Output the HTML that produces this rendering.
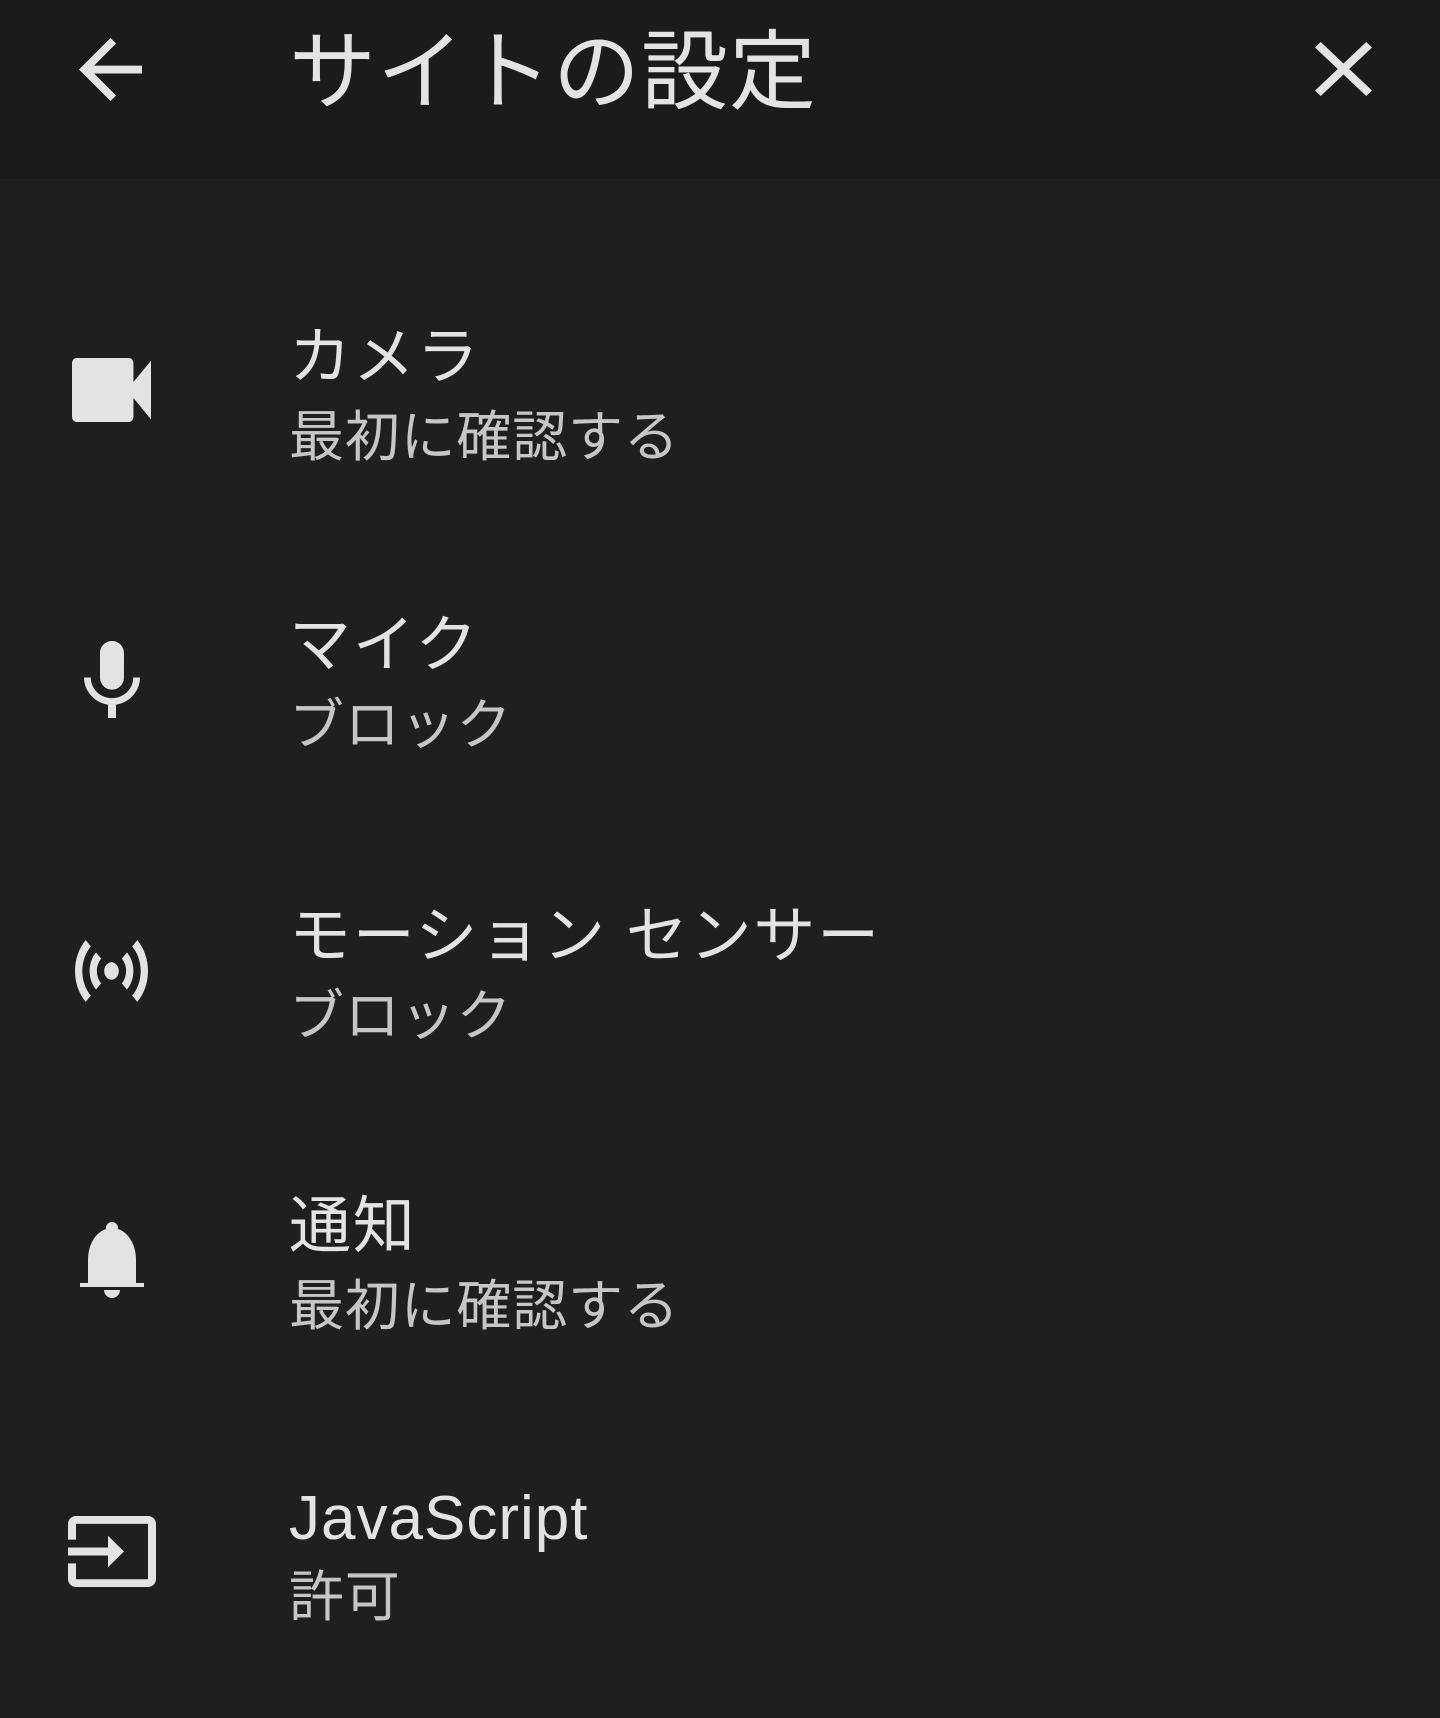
<!DOCTYPE html>
<html><head><meta charset="utf-8"><style>
html,body{margin:0;padding:0}
body{width:1440px;height:1718px;background:#1f1f1f;position:relative;overflow:hidden;font-family:"Liberation Sans","Noto Sans CJK JP",sans-serif}
.hdr{position:absolute;left:0;top:0;width:1440px;height:179px;background:#1b1b1b}
.t{position:absolute;left:289px;line-height:1;white-space:nowrap;color:#e3e3e3}
.a{font-size:62px;letter-spacing:1.8px}
.b{font-size:55px;color:#c6c6c6;letter-spacing:0.8px}
svg{position:absolute;fill:#e3e3e3}
</style></head><body>
<div class="hdr"></div>
<svg style="left:79px;top:38px;width:63px;height:63px" viewBox="4 4 16 16" preserveAspectRatio="none"><path d="M20 11H7.83l5.59-5.59L12 4l-8 8 8 8 1.41-1.41L7.83 13H20v-2z"/></svg>
<div class="t" style="top:29px;font-size:87px;letter-spacing:1px">サイトの設定</div>
<svg style="left:1315px;top:42px;width:57px;height:54px" viewBox="5 5 14 14" preserveAspectRatio="none"><path d="M19 6.41L17.59 5 12 10.59 6.41 5 5 6.41 10.59 12 5 17.59 6.41 19 12 13.41 17.59 19 19 17.59 13.41 12z"/></svg>

<svg style="left:72px;top:358px;width:79px;height:64px" viewBox="3 6 18 12" preserveAspectRatio="none"><path d="M17 10.5V7c0-.55-.45-1-1-1H4c-.55 0-1 .45-1 1v10c0 .55.45 1 1 1h12c.55 0 1-.45 1-1v-3.5l4 4v-11l-4 4z"/></svg>
<div class="t a" style="top:327px">カメラ</div>
<div class="t b" style="top:410px">最初に確認する</div>

<svg style="left:84px;top:641px;width:56px;height:77px" viewBox="5 2 14 19" preserveAspectRatio="none"><path d="M12 14c1.66 0 2.99-1.34 2.99-3L15 5c0-1.66-1.34-3-3-3S9 3.34 9 5v6c0 1.66 1.34 3 3 3zm5.3-3c0 3-2.54 5.1-5.3 5.1S6.7 14 6.7 11H5c0 3.41 2.72 6.23 6 6.72V21h2v-3.28c3.28-.48 6-3.3 6-6.72h-1.7z"/></svg>
<div class="t a" style="top:615px">マイク</div>
<div class="t b" style="top:698px">ブロック</div>

<svg style="left:75px;top:940px;width:73px;height:62px" viewBox="2 4.9 20 14.2" preserveAspectRatio="none"><path d="M7.76 16.24C6.67 15.16 6 13.66 6 12s.67-3.16 1.76-4.24l1.42 1.42C8.45 9.9 8 10.9 8 12c0 1.1.45 2.1 1.17 2.83l-1.41 1.41zm8.48 0C17.33 15.16 18 13.66 18 12s-.67-3.16-1.76-4.24l-1.42 1.42C15.55 9.9 16 10.9 16 12c0 1.1-.45 2.1-1.17 2.83l1.41 1.41zM12 10c-1.1 0-2 .9-2 2s.9 2 2 2 2-.9 2-2-.9-2-2-2zm8 2c0 2.21-.9 4.21-2.35 5.65l1.42 1.42C20.88 17.26 22 14.76 22 12s-1.12-5.26-2.93-7.07l-1.42 1.42C19.1 7.79 20 9.79 20 12zM6.35 6.35L4.93 4.93C3.12 6.74 2 9.24 2 12s1.12 5.26 2.93 7.07l1.42-1.42C4.9 16.21 4 14.21 4 12s.9-4.21 2.35-5.65z"/></svg>
<div class="t a" style="top:906px">モーション センサー</div>
<div class="t b" style="top:989px">ブロック</div>

<svg style="left:80px;top:1220px;width:64px;height:82px" viewBox="0 0 64 82" preserveAspectRatio="none"><circle cx="32" cy="8" r="6"/><path d="M8 66V40C8 20 20 8 32 8S56 20 56 40V66z"/><rect x="0" y="63" width="64" height="4"/><path d="M24 70h16a8 8 0 0 1-16 0z"/></svg>
<div class="t a" style="top:1196px">通知</div>
<div class="t b" style="top:1279px">最初に確認する</div>

<svg style="left:68px;top:1516px;width:88px;height:71px" viewBox="1 3 22 18" preserveAspectRatio="none"><path d="M21 3.01H3c-1.1 0-2 .9-2 2V9h2V4.99h18v14.03H3V15H1v4.01c0 1.1.9 1.98 2 1.98h18c1.1 0 2-.88 2-1.98v-14c0-1.11-.9-2-2-2zM11 16l4-4-4-4v3H1v2h10v3z"/></svg>
<div class="t a" style="top:1488px;letter-spacing:1px">JavaScript</div>
<div class="t b" style="top:1570px">許可</div>
</body></html>
